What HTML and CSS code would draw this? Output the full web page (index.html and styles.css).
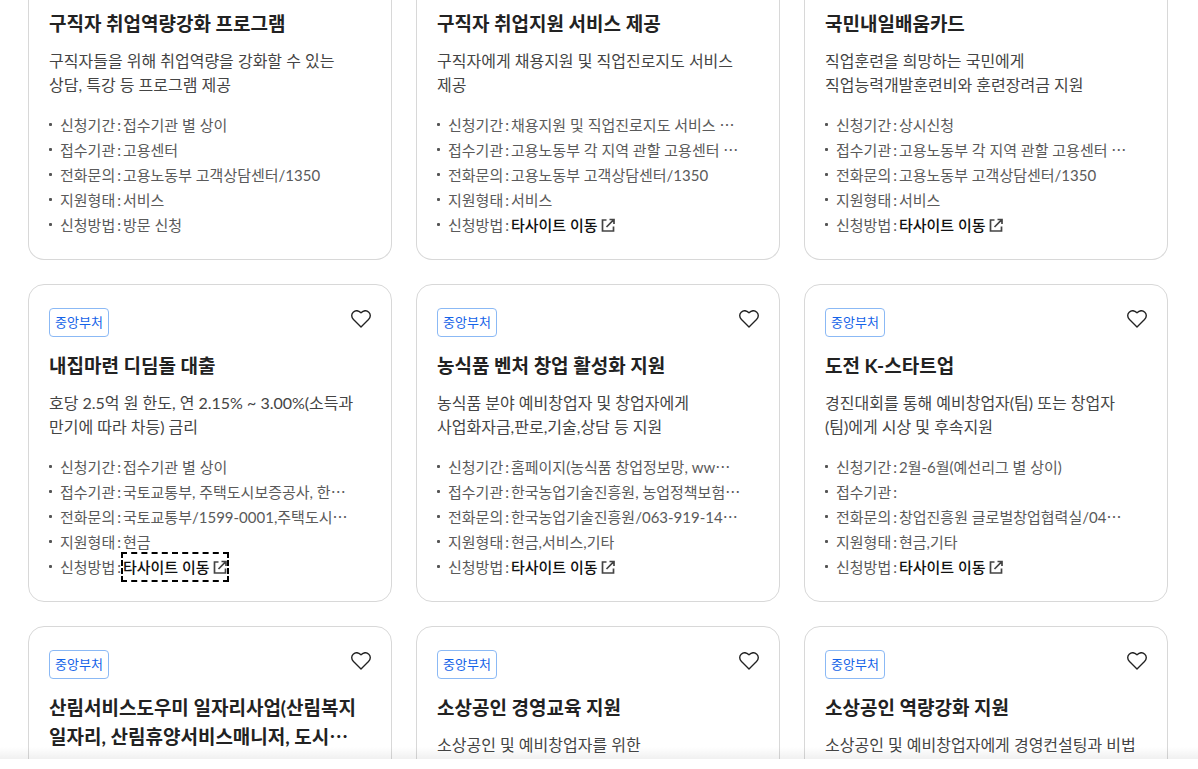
FILE: index.html
```html
<!DOCTYPE html>
<html lang="ko">
<head>
<meta charset="utf-8">
<title>지원 서비스</title>
<link rel="stylesheet" href="styles.css">
</head>
<body>
<svg class="symbols" aria-hidden="true">
  <symbol id="heart" viewBox="0 0 20 18"><path d="M10 17 2.500 9.500C.2 7.200.2 4 2.200 2.200 4.400.3 7.600.5 10 2.700c2.400-2.200 5.600-2.400 7.800-.5 2 1.800 2 5-.3 7.300Z" fill="none" stroke="#222" stroke-width="1.400" stroke-linejoin="round"/></symbol>
  <symbol id="external" viewBox="0 0 14 14"><path d="M5.500 2H1.500v11h11V8.500M8.500 1.500H13V6M12.800 1.700 5.500 9" fill="none" stroke="#444" stroke-width="1.700"/></symbol>
</svg>
<main class="viewport">
  <section class="cards">
    <article class="card card-cut">
      <h2 class="title">구직자 취업역량강화 프로그램</h2>
      <p class="desc">구직자들을 위해 취업역량을 강화할 수 있는<br>상담, 특강 등 프로그램 제공</p>
      <ul class="info">
        <li><span>신청기간</span><span>:</span><span>접수기관 별 상이</span></li>
        <li><span>접수기관</span><span>:</span><span>고용센터</span></li>
        <li><span>전화문의</span><span>:</span><span>고용노동부 고객상담센터/1350</span></li>
        <li><span>지원형태</span><span>:</span><span>서비스</span></li>
        <li><span>신청방법</span><span>:</span><span>방문 신청</span></li>
      </ul>
    </article>
    <article class="card card-cut">
      <h2 class="title">구직자 취업지원 서비스 제공</h2>
      <p class="desc">구직자에게 채용지원 및 직업진로지도 서비스<br>제공</p>
      <ul class="info">
        <li><span>신청기간</span><span>:</span><span>채용지원 및 직업진로지도 서비스 <span class="more">⋯</span></span></li>
        <li><span>접수기관</span><span>:</span><span>고용노동부 각 지역 관할 고용센터 <span class="more">⋯</span></span></li>
        <li><span>전화문의</span><span>:</span><span>고용노동부 고객상담센터/1350</span></li>
        <li><span>지원형태</span><span>:</span><span>서비스</span></li>
        <li><span>신청방법</span><span>:</span><a class="link" href="#">타사이트 이동<svg class="external" aria-hidden="true"><use href="#external"/></svg></a></li>
      </ul>
    </article>
    <article class="card card-cut">
      <h2 class="title">국민내일배움카드</h2>
      <p class="desc">직업훈련을 희망하는 국민에게<br>직업능력개발훈련비와 훈련장려금 지원</p>
      <ul class="info">
        <li><span>신청기간</span><span>:</span><span>상시신청</span></li>
        <li><span>접수기관</span><span>:</span><span>고용노동부 각 지역 관할 고용센터 <span class="more">⋯</span></span></li>
        <li><span>전화문의</span><span>:</span><span>고용노동부 고객상담센터/1350</span></li>
        <li><span>지원형태</span><span>:</span><span>서비스</span></li>
        <li><span>신청방법</span><span>:</span><a class="link" href="#">타사이트 이동<svg class="external" aria-hidden="true"><use href="#external"/></svg></a></li>
      </ul>
    </article>
    <article class="card">
      <div class="head"><span class="badge">중앙부처</span><button class="like" type="button" aria-label="관심"><svg class="heart"><use href="#heart"/></svg></button></div>
      <h2 class="title">내집마련 디딤돌 대출</h2>
      <p class="desc">호당 2.5억 원 한도, 연 2.15% ~ 3.00%(소득과<br>만기에 따라 차등) 금리</p>
      <ul class="info">
        <li><span>신청기간</span><span>:</span><span>접수기관 별 상이</span></li>
        <li><span>접수기관</span><span>:</span><span>국토교통부, 주택도시보증공사, 한<span class="more">⋯</span></span></li>
        <li><span>전화문의</span><span>:</span><span>국토교통부/1599-0001,주택도시<span class="more">⋯</span></span></li>
        <li><span>지원형태</span><span>:</span><span>현금</span></li>
        <li><span>신청방법</span><span>:</span><a class="link link-focused" href="#">타사이트 이동<svg class="external" aria-hidden="true"><use href="#external"/></svg></a></li>
      </ul>
    </article>
    <article class="card">
      <div class="head"><span class="badge">중앙부처</span><button class="like" type="button" aria-label="관심"><svg class="heart"><use href="#heart"/></svg></button></div>
      <h2 class="title">농식품 벤처 창업 활성화 지원</h2>
      <p class="desc">농식품 분야 예비창업자 및 창업자에게<br>사업화자금,판로,기술,상담 등 지원</p>
      <ul class="info">
        <li><span>신청기간</span><span>:</span><span>홈페이지(농식품 창업정보망, ww<span class="more">⋯</span></span></li>
        <li><span>접수기관</span><span>:</span><span>한국농업기술진흥원, 농업정책보험<span class="more">⋯</span></span></li>
        <li><span>전화문의</span><span>:</span><span>한국농업기술진흥원/063-919-14<span class="more">⋯</span></span></li>
        <li><span>지원형태</span><span>:</span><span>현금,서비스,기타</span></li>
        <li><span>신청방법</span><span>:</span><a class="link" href="#">타사이트 이동<svg class="external" aria-hidden="true"><use href="#external"/></svg></a></li>
      </ul>
    </article>
    <article class="card">
      <div class="head"><span class="badge">중앙부처</span><button class="like" type="button" aria-label="관심"><svg class="heart"><use href="#heart"/></svg></button></div>
      <h2 class="title">도전 K-스타트업</h2>
      <p class="desc">경진대회를 통해 예비창업자(팀) 또는 창업자<br>(팀)에게 시상 및 후속지원</p>
      <ul class="info">
        <li><span>신청기간</span><span>:</span><span>2월-6월(예선리그 별 상이)</span></li>
        <li><span>접수기관</span><span>:</span></li>
        <li><span>전화문의</span><span>:</span><span>창업진흥원 글로벌창업협력실/04<span class="more">⋯</span></span></li>
        <li><span>지원형태</span><span>:</span><span>현금,기타</span></li>
        <li><span>신청방법</span><span>:</span><a class="link" href="#">타사이트 이동<svg class="external" aria-hidden="true"><use href="#external"/></svg></a></li>
      </ul>
    </article>
    <article class="card">
      <div class="head"><span class="badge">중앙부처</span><button class="like" type="button" aria-label="관심"><svg class="heart"><use href="#heart"/></svg></button></div>
      <h2 class="title">산림서비스도우미 일자리사업(산림복지<br>일자리, 산림휴양서비스매니저, 도시<span class="more">⋯</span></h2>
    </article>
    <article class="card">
      <div class="head"><span class="badge">중앙부처</span><button class="like" type="button" aria-label="관심"><svg class="heart"><use href="#heart"/></svg></button></div>
      <h2 class="title">소상공인 경영교육 지원</h2>
      <p class="desc">소상공인 및 예비창업자를 위한</p>
    </article>
    <article class="card">
      <div class="head"><span class="badge">중앙부처</span><button class="like" type="button" aria-label="관심"><svg class="heart"><use href="#heart"/></svg></button></div>
      <h2 class="title">소상공인 역량강화 지원</h2>
      <p class="desc">소상공인 및 예비창업자에게 경영컨설팅과 비법</p>
    </article>
  </section>
</main>
</body>
</html>
```
FILE: styles.css
```css
* { box-sizing: border-box; }

body {
  display: flex;
  flex-direction: column;
  height: 100vh;
  margin: 0;
  padding-bottom: 10px;
  background: #fff;
  color: #444;
  font-family: Lato, "Noto Sans CJK KR", sans-serif;
  word-break: keep-all;
}

.symbols { position: absolute; width: 0; height: 0; }

.viewport {
  position: relative;
  flex: 1;
  min-height: 0;
  overflow: hidden;
}

.viewport::after {
  content: "";
  position: absolute;
  inset: auto 0 0;
  height: 12px;
  background: linear-gradient(rgba(0, 0, 0, 0), rgba(0, 0, 0, 0.06));
}

.cards {
  display: grid;
  grid-template-columns: repeat(3, minmax(0, 1fr));
  gap: 24px;
  padding: 0 30px 0 28px;
}

.card {
  min-height: 318px;
  padding: 23px 20px 22px;
  border: 1px solid #d8d8d8;
  border-radius: 16px;
}

.card-cut {
  min-height: 0;
  padding-top: 10px;
  border-top: 0;
  border-radius: 0 0 16px 16px;
}

.head {
  display: flex;
  justify-content: space-between;
  align-items: flex-start;
  margin-bottom: 14px;
}

.badge {
  padding: 0 5px 1px;
  border: 1px solid #8bb9f5;
  border-radius: 4px;
  color: #1463e8;
  font-size: 13px;
  line-height: 26px;
}

.like {
  display: flex;
  padding: 2px 0 0;
  border: 0;
  background: none;
}

.heart { width: 20px; height: 18px; }

.title {
  margin: 0 0 11px;
  color: #222;
  font-size: 19px;
  font-weight: 700;
  line-height: 28px;
  white-space: nowrap;
}

.card:not(.card-cut) .title { padding-top: 1px; }

.desc {
  margin: 0 0 15px;
  font-size: 16px;
  line-height: 24px;
  white-space: nowrap;
}

.info {
  margin: 0;
  padding: 0;
  list-style: none;
  color: #5a5a5a;
  font-size: 15px;
  line-height: 26px;
}

.info li {
  display: flex;
  align-items: center;
  gap: 2px;
  height: 25px;
  white-space: pre;
}

.info li::before {
  content: "";
  width: 3px;
  height: 3px;
  margin-right: 6px;
  border-radius: 1px;
  background: #555;
}

.more { font-family: "Noto Sans CJK KR", sans-serif; }

.link {
  display: inline-flex;
  align-items: center;
  gap: 3px;
  color: #111;
  font-weight: 500;
  text-decoration: none;
}

.link-focused { outline: 2px dashed #000; }

.external { width: 14px; height: 14px; }
```
